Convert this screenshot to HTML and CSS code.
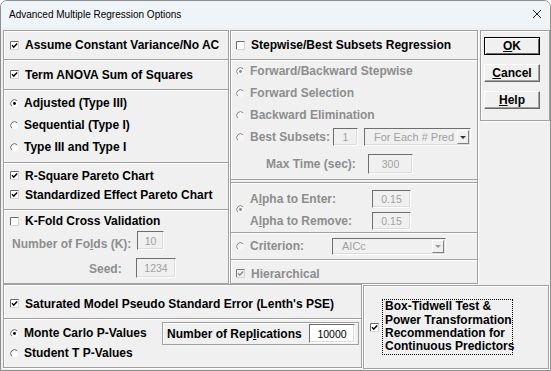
FILE: index.html
```html
<!DOCTYPE html>
<html>
<head>
<meta charset="utf-8">
<title>Advanced Multiple Regression Options</title>
<link rel="stylesheet" href="styles.css">
</head>
<body>
<svg class="defs" aria-hidden="true">
  <defs>
    <symbol id="cbon" viewBox="0 0 9 9">
      <rect width="9" height="9" fill="#fff"/>
      <path d="M0.5 9V0.5H9" fill="none" stroke="#6a6a6a"/>
      <path d="M8.5 0.5V8.5H0" fill="none" stroke="#d4d4d4"/>
      <path d="M2 4.1L3.7 6.1L7.2 2.4" fill="none" stroke="#000" stroke-width="1.4"/>
    </symbol>
    <symbol id="cboff" viewBox="0 0 9 9">
      <rect width="9" height="9" fill="#fff"/>
      <path d="M0.5 9V0.5H9" fill="none" stroke="#6a6a6a"/>
      <path d="M8.5 0.5V8.5H0" fill="none" stroke="#d4d4d4"/>
    </symbol>
    <symbol id="cbdis" viewBox="0 0 9 9">
      <rect width="9" height="9" fill="#f4f4f4"/>
      <path d="M0.5 9V0.5H9" fill="none" stroke="#7a7a7a"/>
      <path d="M8.5 0.5V8.5H0" fill="none" stroke="#d4d4d4"/>
      <path d="M2 4.1L3.7 6.1L7.2 2.4" fill="none" stroke="#8d8d8d" stroke-width="1.4"/>
    </symbol>
    <symbol id="rbon" viewBox="0 0 9 9">
      <circle cx="4.5" cy="4.5" r="3.8" fill="#fff"/>
      <path d="M1.8 7.2A3.8 3.8 0 0 1 7.2 1.8" fill="none" stroke="#6a6a6a"/>
      <circle cx="4.5" cy="4.5" r="1.4" fill="#000"/>
    </symbol>
    <symbol id="rboff" viewBox="0 0 9 9">
      <circle cx="4.5" cy="4.5" r="3.8" fill="#fff"/>
      <path d="M1.8 7.2A3.8 3.8 0 0 1 7.2 1.8" fill="none" stroke="#6a6a6a"/>
    </symbol>
    <symbol id="rbdison" viewBox="0 0 9 9">
      <circle cx="4.5" cy="4.5" r="3.8" fill="#f6f6f6"/>
      <path d="M1.8 7.2A3.8 3.8 0 0 1 7.2 1.8" fill="none" stroke="#8a8a8a"/>
      <circle cx="4.5" cy="4.5" r="1.4" fill="#8a8a8a"/>
    </symbol>
    <symbol id="rbdisoff" viewBox="0 0 9 9">
      <circle cx="4.5" cy="4.5" r="3.8" fill="#f6f6f6"/>
      <path d="M1.8 7.2A3.8 3.8 0 0 1 7.2 1.8" fill="none" stroke="#8a8a8a"/>
    </symbol>
  </defs>
</svg>

<div class="win">
  <div class="titlebar">
    <span class="title">Advanced Multiple Regression Options</span>
    <svg class="close" width="10" height="10" viewBox="0 0 10 10"><path d="M1 1L9 9M9 1L1 9" stroke="#222" stroke-width="1"/></svg>
  </div>

  <div class="body">
    <div class="top">
      <!-- left column -->
      <div class="frame col-left">
        <div class="sec l-const"><div class="row"><svg class="ico"><use href="#cbon"/></svg>Assume Constant Variance/No AC</div></div>
        <div class="sec sep l-anova"><div class="row"><svg class="ico"><use href="#cbon"/></svg>Term ANOVA Sum of Squares</div></div>
        <div class="sec sep l-type">
          <div class="row r22"><svg class="ico rb"><use href="#rbon"/></svg>Adjusted (Type III)</div>
          <div class="row r22"><svg class="ico rb"><use href="#rboff"/></svg>Sequential (Type I)</div>
          <div class="row r22"><svg class="ico rb"><use href="#rboff"/></svg>Type III and Type I</div>
        </div>
        <div class="sec sep l-pareto">
          <div class="row r19"><svg class="ico"><use href="#cbon"/></svg>R-Square Pareto Chart</div>
          <div class="row r19"><svg class="ico"><use href="#cbon"/></svg>Standardized Effect Pareto Chart</div>
        </div>
        <div class="sec sep l-kfold">
          <div class="row r18"><svg class="ico"><use href="#cboff"/></svg>K-Fold Cross Validation</div>
          <div class="row folds"><span class="dis lbl-folds">Number of Fo<u>l</u>ds (K):</span><span class="inp dim w27">10</span></div>
          <div class="row seed"><span class="dis lbl-seed">Seed:</span><span class="inp dim w40">1234</span></div>
        </div>
      </div>

      <!-- middle column -->
      <div class="frame col-mid">
        <div class="sec m-top"><div class="row"><svg class="ico"><use href="#cboff"/></svg>Stepwise/Best Subsets Regression</div></div>
        <div class="sec sep m-method">
          <div class="row r22 dis"><svg class="ico rb"><use href="#rbdison"/></svg>Forward/Backward Stepwise</div>
          <div class="row r22 dis"><svg class="ico rb"><use href="#rbdisoff"/></svg>Forward Selection</div>
          <div class="row r22 dis"><svg class="ico rb"><use href="#rbdisoff"/></svg>Backward Elimination</div>
          <div class="row r22 dis"><svg class="ico rb"><use href="#rbdisoff"/></svg><span class="lbl-best">Best Subsets:</span><span class="inp dim w25">1</span><span class="combo w107"><span class="ctext">For Each # Pred</span><span class="cbtn"><i class="tri dark"></i></span></span></div>
          <div class="row maxtime dis"><span class="lbl-max">Max Time (sec):</span><span class="inp dim w45 h20">300</span></div>
        </div>
        <div class="sec sep m-alpha">
          <div class="row alpha dis">
            <svg class="ico rb"><use href="#rbdison"/></svg>
            <div class="stack">
              <div class="arow"><span class="lbl-alpha">A<u>l</u>pha to Enter:</span><span class="inp dim w39">0.15</span></div>
              <div class="arow"><span class="lbl-alpha">A<u>l</u>pha to Remove:</span><span class="inp dim w39">0.15</span></div>
            </div>
          </div>
        </div>
        <div class="sec sep m-crit">
          <div class="row crit dis"><svg class="ico rb"><use href="#rbdisoff"/></svg><span class="lbl-crit">Criterion:</span><span class="combo w114 h17"><span class="ctext">AICc</span><span class="cbtn"><i class="tri"></i></span></span></div>
        </div>
        <div class="sec sep m-hier">
          <div class="row hier dis"><svg class="ico"><use href="#cbdis"/></svg>Hierarchical</div>
        </div>
      </div>

      <!-- buttons -->
      <div class="frame col-right">
        <div class="btn def"><u>O</u>K</div>
        <div class="btn"><u>C</u>ancel</div>
        <div class="btn"><u>H</u>elp</div>
      </div>
    </div>

    <div class="bottom">
      <div class="frame pse">
        <div class="sec b-sat"><div class="row sat"><svg class="ico"><use href="#cbon"/></svg>Saturated Model Pseudo Standard Error (Lenth's PSE)</div></div>
        <div class="sec sep b-pv">
          <div class="pvals">
            <div class="row r20"><svg class="ico rb"><use href="#rbon"/></svg>Monte Carlo P-Values</div>
            <div class="row r20"><svg class="ico rb"><use href="#rboff"/></svg>Student T P-Values</div>
          </div>
          <div class="reps"><span>Number of Rep<u>l</u>ications</span><span class="inp on w46">10000</span></div>
        </div>
      </div>
      <div class="frame boxtid">
        <svg class="ico bt"><use href="#cbon"/></svg>
        <div class="focus">Box-Tidwell Test &amp;<br>Power Transformation<br>Recommendation for<br>Continuous Predictors</div>
      </div>
    </div>
  </div>
</div>
</body>
</html>
```

FILE: styles.css
```css
* { box-sizing: border-box; }
html, body { margin: 0; padding: 0; }
body {
  width: 551px;
  height: 371px;
  overflow: hidden;
  background: #fff;
  font-family: "Liberation Sans", Arial, sans-serif;
}
.defs { display: block; width: 0; height: 0; overflow: hidden; }

.win {
  width: 551px;
  height: 371px;
  border: 1px solid #8e8e8e;
  border-radius: 7px 7px 0 0;
  background: #f0f0f0;
  overflow: hidden;
}

.titlebar {
  height: 26px;
  background: #eff4f9;
  display: flex;
  align-items: center;
  justify-content: space-between;
  padding: 0 8px 0 8px;
}
.title { font-size: 10px; color: #000; }
.close { display: block; }

.body { padding: 3px 0 0 2px; }

.top { display: flex; height: 254px; align-items: flex-start; }

.frame {
  border: 1px solid #a0a0a0;
  box-shadow: inset 1px 1px 0 #fff, 1px 1px 0 #fff;
  display: flex;
  flex-direction: column;
}
.sep {
  border-top: 1px solid #a0a0a0;
  box-shadow: inset 0 1px 0 #fff;
}

.col-left { width: 226px; height: 254px; }
.col-mid { width: 248px; height: 254px; margin-left: 1px; }
.col-right {
  width: 70px;
  height: 91px;
  margin-left: 2px;
  padding: 6px 0 0 3px;
  gap: 9px;
}

.row {
  display: flex;
  align-items: center;
  font-size: 12px;
  font-weight: bold;
  color: #000;
  white-space: nowrap;
}
.sec > .row:only-child { height: 100%; }
.col-left .row { padding-left: 6px; }
.col-mid .row { padding-left: 5px; }
.ico { width: 9px; height: 9px; margin-right: 6px; flex: none; }
.rb { margin-right: 5px; }

.r22 { height: 22px; }
.r20 { height: 20px; }
.r19 { height: 19px; }
.r18 { height: 18px; }

.dis { color: #8d8d8d; }

/* left column sections */
.l-const { height: 28px; }
.l-anova { height: 30px; }
.l-type { height: 73px; padding-top: 2px; }
.l-pareto { height: 47px; padding-top: 3px; }
.l-kfold { height: 74px; padding-top: 2px; }
.folds { height: 19px; margin-top: 1px; }
.seed { height: 20px; margin-top: 8px; }
.col-left .folds, .col-left .seed { padding-left: 0; }
.lbl-folds { width: 133px; padding-left: 8px; padding-top: 6px; }
.lbl-seed { width: 132px; padding-left: 85px; padding-top: 1px; }

/* inputs */
.inp {
  display: flex;
  align-items: center;
  justify-content: center;
  height: 19px;
  font-size: 10.5px;
  font-weight: normal;
  border: 1px solid;
  border-color: #6e6e6e #fff #fff #6e6e6e;
  box-shadow: inset -1px -1px 0 #dcdcdc;
  flex: none;
}
.dim { background: #f0f0f0; color: #a0a0a0; }
.on { background: #fff; color: #000; }
.w25 { width: 25px; height: 18px; }
.w27 { width: 27px; }
.w39 { width: 39px; height: 18px; }
.w40 { width: 40px; height: 20px; }
.w45 { width: 45px; }
.w46 { width: 46px; }
.h20 { height: 20px; }

/* combos */
.combo {
  display: flex;
  height: 18px;
  margin-left: 6px;
  border: 1px solid;
  border-color: #6e6e6e #fff #fff #6e6e6e;
  box-shadow: inset -1px -1px 0 #dcdcdc;
  background: #f0f0f0;
  flex: none;
}
.w107 { width: 107px; }
.w114 { width: 114px; margin-left: 0; }
.h17 { height: 17px; }
.ctext {
  flex: 1;
  padding-left: 9px;
  font-size: 11px;
  font-weight: normal;
  color: #a0a0a0;
  display: flex;
  align-items: center;
}
.cbtn {
  width: 12px;
  margin: 1px 1px 1px 0;
  border: 1px solid;
  border-color: #fff #808080 #808080 #fff;
  background: #f0f0f0;
  display: flex;
  align-items: center;
  justify-content: center;
}
.tri {
  width: 0;
  height: 0;
  border-left: 3px solid transparent;
  border-right: 3px solid transparent;
  border-top: 3px solid #9a9a9a;
}
.tri.dark { border-top-color: #333; }

/* middle column sections */
.m-top { height: 28px; }
.m-method { height: 121px; border-bottom: 1px solid #a0a0a0; }
.lbl-best { width: 83px; }
.maxtime { height: 20px; margin-top: 6px; }
.col-mid .maxtime { padding-left: 35px; }
.lbl-max { width: 102px; }
.m-alpha { height: 50px; margin-top: 2px; padding-top: 4px; }
.alpha { align-items: center; height: 40px; }
.stack { display: flex; flex-direction: column; gap: 4px; }
.arow { display: flex; align-items: center; }
.lbl-alpha { width: 122px; }
.m-crit { height: 27px; }
.crit { height: 100%; }
.lbl-crit { width: 82px; }
.m-hier { height: 24px; }
.hier { height: 100%; padding-top: 4px; }

/* buttons */
.btn {
  width: 56px;
  height: 18px;
  display: flex;
  align-items: center;
  justify-content: center;
  font-size: 12px;
  font-weight: bold;
  background: #f0f0f0;
  border: 1px solid;
  border-color: #fff #696969 #696969 #fff;
  box-shadow: inset -1px -1px 0 #a0a0a0;
}
.btn.def {
  border: 1px solid #000;
  box-shadow: inset 1px 1px 0 #fff, inset -1px -1px 0 #696969;
}

/* bottom */
.bottom { display: flex; align-items: flex-start; }
.pse { width: 359px; height: 84px; }
.b-sat { height: 33px; }
.sat { height: 100%; padding-top: 4px; padding-left: 6px; }
.b-pv { height: 49px; display: flex; }
.pvals { width: 158px; padding-top: 4px; }
.pvals .row { padding-left: 6px; }
.reps {
  width: 197px;
  height: 23px;
  margin-top: 3px;
  display: flex;
  align-items: center;
  justify-content: space-between;
  padding: 0 3px 0 4px;
  font-size: 12px;
  font-weight: bold;
  border: 1px solid #a0a0a0;
  box-shadow: inset 1px 1px 0 #fff;
}
.boxtid {
  width: 186px;
  height: 84px;
  margin: 1px 0 0 1px;
  flex-direction: row;
  align-items: center;
  padding-left: 6px;
}
.bt { margin-right: 3px; }
.focus {
  border: 1px dotted #000;
  padding: 0 2px;
  width: 131px;
  font-size: 12px;
  font-weight: bold;
  line-height: 13.4px;
  white-space: nowrap;
}
```
